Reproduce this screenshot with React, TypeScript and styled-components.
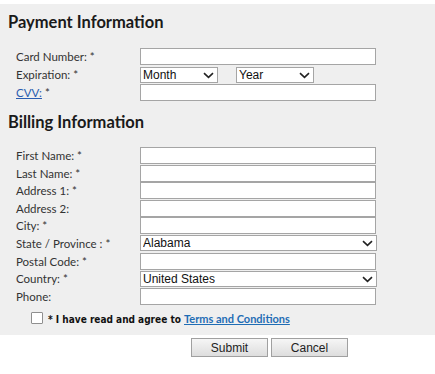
import styled, { createGlobalStyle } from 'styled-components';

const GlobalStyle = createGlobalStyle`
  body {
    margin: 0;
    background: #ffffff;
    font-family: Lato, "Open Sans", sans-serif;
  }
`;

const Chevron = () => (
  <svg width="11" height="7" viewBox="0 0 11 7">
    <path d="M1 1.2 L5.5 5.4 L10 1.2" fill="none" stroke="#222" strokeWidth="1.6" />
  </svg>
);

const SelectField = ({ value, width }: { value: string; width: number }) => (
  <SelectWrap $width={width}>
    <Select defaultValue={value}>
      <option>{value}</option>
    </Select>
    <ChevronSlot>
      <Chevron />
    </ChevronSlot>
  </SelectWrap>
);

const App = () => {
  return (
    <Page>
      <GlobalStyle />
      <Panel>
        <Heading>Payment Information</Heading>
        <FormGrid $gap={1} $top={16}>
          <Label>Card Number: *</Label>
          <Input type="text" />
          <Label>Expiration: *</Label>
          <SelectPair>
            <SelectField value="Month" width={78} />
            <SelectField value="Year" width={78} />
          </SelectPair>
          <Label>
            <LabelLink href="#">CVV:</LabelLink> *
          </Label>
          <Input type="text" />
        </FormGrid>

        <Heading $top={11}>Billing Information</Heading>
        <FormGrid $gap={0.6} $top={15}>
          <Label>First Name: *</Label>
          <Input type="text" />
          <Label>Last Name: *</Label>
          <Input type="text" />
          <Label>Address 1: *</Label>
          <Input type="text" />
          <Label>Address 2:</Label>
          <Input type="text" />
          <Label>City: *</Label>
          <Input type="text" />
          <Label>State / Province : *</Label>
          <SelectField value="Alabama" width={237} />
          <Label>Postal Code: *</Label>
          <Input type="text" />
          <Label>Country: *</Label>
          <SelectField value="United States" width={237} />
          <Label>Phone:</Label>
          <Input type="text" />
        </FormGrid>

        <AgreeRow>
          <Checkbox type="checkbox" />
          <AgreeText>
            * I have read and agree to <TermsLink href="#">Terms and Conditions</TermsLink>
          </AgreeText>
        </AgreeRow>
      </Panel>
      <ButtonRow>
        <Button>Submit</Button>
        <Button>Cancel</Button>
      </ButtonRow>
    </Page>
  );
};

const Page = styled.div`
  padding-top: 4px;
  width: 435px;
`;

const Panel = styled.div`
  background: #efefef;
  padding: 8px 0 0 8px;
  height: 331px;
  box-sizing: border-box;
  overflow: hidden;
`;

const Heading = styled.h2<{ $top?: number }>`
  margin: ${({ $top }) => $top ?? 0}px 0 0 0;
  font-family: Lato, sans-serif;
  font-size: 16.5px;
  font-weight: 700;
  line-height: 20px;
  color: #1a1a1a;
`;

const FormGrid = styled.div<{ $gap: number; $top: number }>`
  display: grid;
  grid-template-columns: 124px 237px;
  grid-auto-rows: 17px;
  row-gap: ${({ $gap }) => $gap}px;
  margin: ${({ $top }) => $top}px 0 0 8px;
  align-items: center;
`;

const Label = styled.div`
  font-family: Lato, sans-serif;
  font-size: 11.5px;
  color: #333;
  line-height: 17px;
`;

const LabelLink = styled.a`
  color: #2a5db0;
  text-decoration: underline;
`;

const Input = styled.input`
  box-sizing: border-box;
  display: block;
  width: 236px;
  height: 17px;
  margin: 0;
  padding: 0 3px;
  border: 1px solid #a5a5a5;
  background: #fff;
  outline: none;
`;

const SelectPair = styled.div`
  display: flex;
  gap: 18px;
  align-items: center;
  height: 17px;
`;

const SelectWrap = styled.div<{ $width: number }>`
  position: relative;
  width: ${({ $width }) => $width}px;
  height: 16px;
`;

const Select = styled.select`
  appearance: none;
  display: block;
  box-sizing: border-box;
  width: 100%;
  height: 16px;
  margin: 0;
  padding: 0 0 0 2px;
  border: 1px solid #a5a5a5;
  border-radius: 0;
  background: #fff;
  font-family: "Liberation Sans", Arial, sans-serif;
  font-size: 12px;
  line-height: 14px;
  color: #111;
  outline: none;
`;

const ChevronSlot = styled.span`
  position: absolute;
  right: 4px;
  top: 5px;
  display: flex;
  pointer-events: none;
`;

const AgreeRow = styled.div`
  display: flex;
  align-items: center;
  gap: 5px;
  margin: 7px 0 0 23px;
`;

const Checkbox = styled.input`
  appearance: none;
  margin: 0;
  width: 12px;
  height: 12px;
  border: 1px solid #8f8f8f;
  border-radius: 1px;
  background: #fff;
`;

const AgreeText = styled.span`
  font-family: "DejaVu Sans", Verdana, sans-serif;
  font-stretch: condensed;
  font-size: 10px;
  font-weight: 700;
  color: #111;
`;

const TermsLink = styled.a`
  font-family: Lato, sans-serif;
  font-stretch: normal;
  font-size: 11px;
  font-weight: 700;
  color: #1f6db5;
  text-decoration: underline;
`;

const ButtonRow = styled.div`
  display: flex;
  gap: 3px;
  padding: 3px 0 0 191px;
`;

const Button = styled.button`
  width: 77px;
  height: 19px;
  padding: 0;
  border: 1px solid #a0a0a0;
  background: linear-gradient(#f6f6f6, #dddddd);
  font-family: "Liberation Sans", Arial, sans-serif;
  font-size: 12px;
  color: #222;
`;

export default App;
